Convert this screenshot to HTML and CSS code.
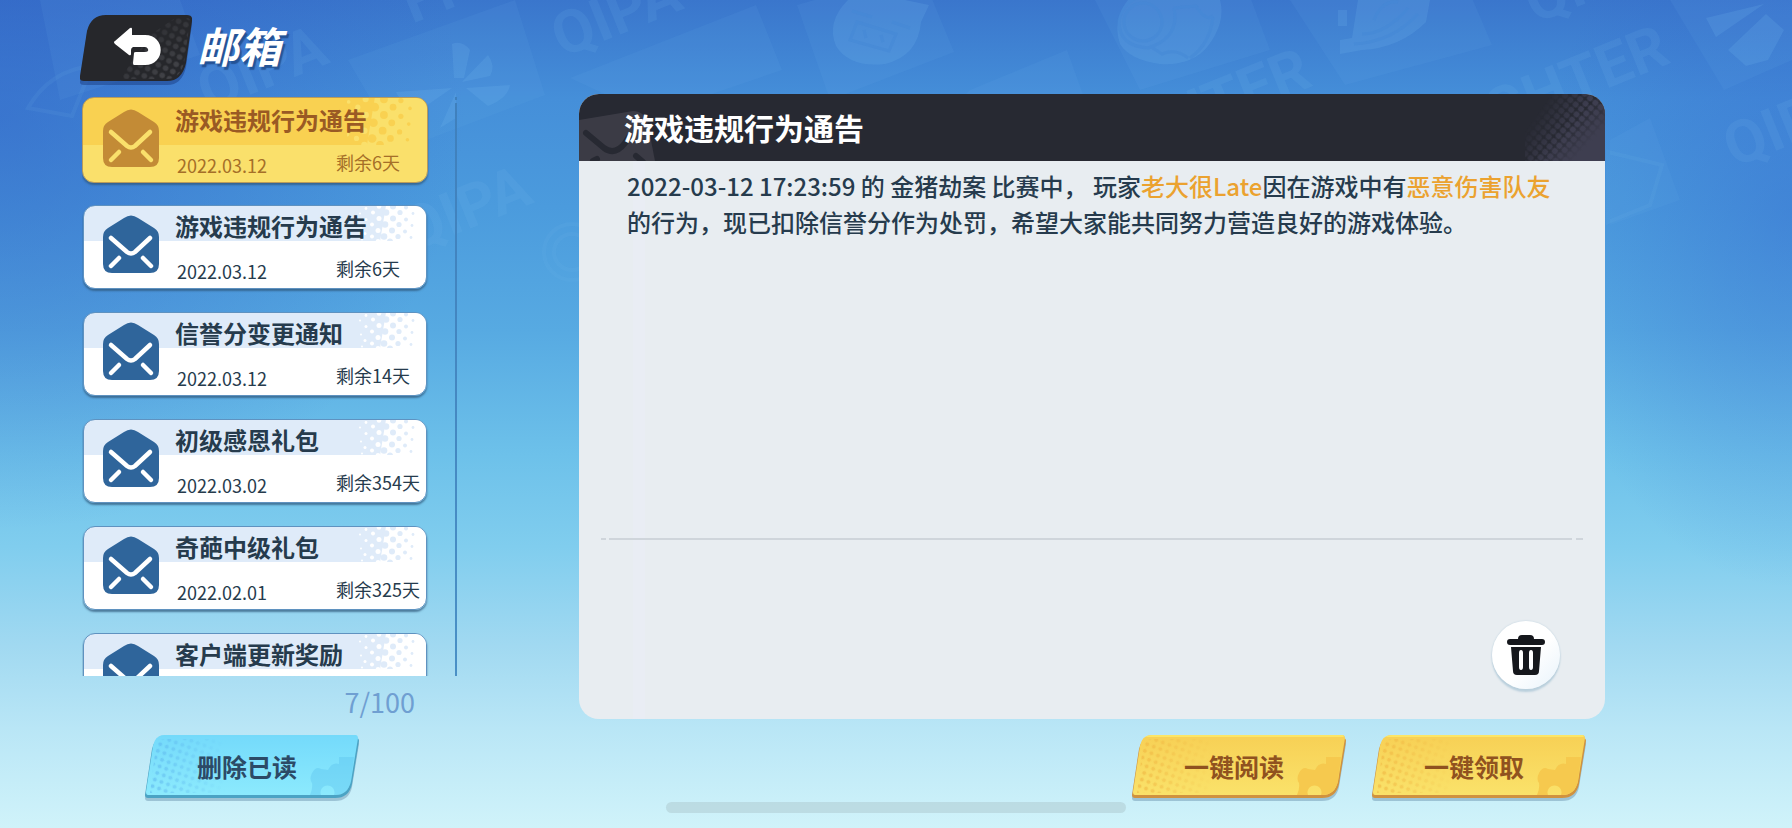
FILE: index.html
```html
<!DOCTYPE html>
<html lang="zh-CN">
  <head>
    <title>邮箱</title>
    <meta charset="UTF-8">
    <meta name="viewport" content="width=device-width, initial-scale=1">
    <link rel="stylesheet" href="styles.css">
  </head>

  <body>
    <!-- shared shapes -->
    <svg class="defs" width="0" height="0" aria-hidden="true">
      <defs>
        <linearGradient id="fade-left"><stop offset="0" stop-color="#fff"/><stop offset="1" stop-color="#000"/></linearGradient>
        <linearGradient id="fade-corner" x1="0.2" y1="0.2" x2="1" y2="0.8"><stop offset="0.1" stop-color="#000"/><stop offset="0.9" stop-color="#fff"/></linearGradient>
        <linearGradient id="face-blue" x2="0" y2="1"><stop offset="0" stop-color="#74dafb"/><stop offset="1" stop-color="#8ceafd"/></linearGradient>
        <linearGradient id="face-yellow" x2="0" y2="1"><stop offset="0" stop-color="#f7d055"/><stop offset="1" stop-color="#fae26a"/></linearGradient>
        <mask id="m-left"><rect width="80" height="60" fill="url(#fade-left)"/></mask>
        <mask id="m-back"><rect width="112" height="67" fill="url(#fade-corner)"/></mask>
        <pattern id="dots-blue" width="7" height="7" patternUnits="userSpaceOnUse" patternTransform="rotate(20)">
          <circle cx="3.5" cy="3.5" r="2" fill="#5cb4ec" fill-opacity="0.6"/>
        </pattern>
        <pattern id="dots-yellow" width="7" height="7" patternUnits="userSpaceOnUse" patternTransform="rotate(20)">
          <circle cx="3.5" cy="3.5" r="2" fill="#f0b440" fill-opacity="0.65"/>
        </pattern>
        <pattern id="dots-back" width="8" height="8" patternUnits="userSpaceOnUse" patternTransform="rotate(25)">
          <circle cx="4" cy="4" r="2.8" fill="#424348"/>
        </pattern>

        <symbol id="envelope" viewBox="0 0 56 58">
          <path fill="currentColor" d="M21 3Q28-2 35 3L51 13Q56 16 56 22V49Q56 58 47 58H9Q0 58 0 49V22Q0 16 5 13Z"/>
          <path class="flap" d="M8 23L24 37Q28 40 32 37L47 23M16 43L8 51M40 43L48 51"/>
        </symbol>

        <!-- halftone for the right end of a mail card -->
        <symbol id="halftone" viewBox="0 0 70 36" preserveAspectRatio="xMaxYMid slice">
          <g class="halftone-light">
            <circle cx="4" cy="8" r="1"/><circle cx="5" cy="22" r="1"/><circle cx="6" cy="34" r="1"/>
            <circle cx="10" cy="3" r="1.4"/><circle cx="10" cy="14" r="1.5"/><circle cx="9" cy="28" r="1.5"/>
            <circle cx="17" cy="7" r="2"/><circle cx="16" cy="19" r="2"/><circle cx="16" cy="31" r="2"/>
            <circle cx="23" cy="1" r="2.3"/><circle cx="23" cy="13" r="2.5"/><circle cx="22" cy="25" r="2.5"/><circle cx="22" cy="36" r="2.4"/>
          </g>
          <path class="halftone-clear" d="M30 0H70V36H24Z"/>
          <g class="halftone-dark">
            <circle cx="30" cy="7" r="3.3"/><circle cx="29" cy="19" r="3.3"/><circle cx="28" cy="31" r="3.3"/>
            <circle cx="37" cy="1" r="3"/><circle cx="37" cy="13" r="3"/><circle cx="36" cy="25" r="3"/><circle cx="34" cy="36" r="3"/>
            <circle cx="44" cy="7" r="2.6"/><circle cx="43" cy="19" r="2.6"/><circle cx="42" cy="31" r="2.6"/>
            <circle cx="50" cy="2" r="2"/><circle cx="50" cy="14" r="2"/><circle cx="49" cy="26" r="2"/>
            <circle cx="57" cy="8" r="1.4"/><circle cx="56" cy="20" r="1.4"/><circle cx="55" cy="32" r="1.4"/>
          </g>
        </symbol>

        <symbol id="plate" viewBox="0 0 214 68">
          <path class="plate-shadow" transform="translate(0 6)" d="M3 60Q0 60 0 57L7 11Q9 0 20 0H211Q214 0 214 3L207 46Q204 60 190 60Z"/>
          <path class="plate-edge" transform="translate(0 3)" d="M3 60Q0 60 0 57L7 11Q9 0 20 0H211Q214 0 214 3L207 46Q204 60 190 60Z"/>
          <path class="plate-face" d="M3 60Q1 60 1 57L8 11Q10 0 20 0H210Q213 0 213 3L206 46Q203 60 190 60Z"/>
          <path class="plate-top" d="M13 2Q16 0 20 0H211L212 2Z"/>
          <path class="plate-dots" mask="url(#m-left)" d="M5 58L11 11Q13 4 20 4H80V58Z"/>
          <path class="plate-gear" fill-rule="evenodd" d="M165 60Q168 53 167 48Q164 44 167 38Q171 31 176 34L183 35Q187 27 194 29L194 22H209L206 46Q203 60 190 60H189A7 7 0 1 0 176 60Z"/>
        </symbol>
      </defs>
    </svg>

    <svg class="scenery" viewBox="0 0 1792 828" preserveAspectRatio="xMidYMin slice" aria-hidden="true">
      <g class="tiles">
        <path d="M40 0H180L200 55L60 100ZM348 60L515 0L545 95L400 150ZM378 70L498 22L514 80L420 118ZM570 78L756 5L782 70L650 115ZM797 5L920 -30L954 52L830 100ZM970 90L1067 50L1085 100H960ZM1090 -10L1240 -30L1270 50L1140 90ZM1290 0L1460 -30L1492 45L1345 85ZM1670 0H1792V60L1724 90ZM1610 140L1650 118L1680 200L1610 225Z"/>
      </g>
      <g class="words">
        <text transform="translate(208 112) rotate(-22)">QIPA</text>
        <text transform="translate(412 24) rotate(-22)">FIGHTER</text>
        <text transform="translate(562 58) rotate(-22)">QIPA</text>
        <text transform="translate(412 252) rotate(-22)">QIPA</text>
        <text transform="translate(1090 176) rotate(-22)">FIGHTER</text>
        <text transform="translate(1448 153) rotate(-22)">FIGHTER</text>
        <text transform="translate(1535 24) rotate(-22)">QIPA</text>
        <text transform="translate(1734 168) rotate(-22)">QIPA</text>
      </g>
      <g class="shapes">
        <!-- fans -->
        <path d="M454 78L452 44Q462 40 470 50L464 78ZM462 82L488 55Q496 66 490 76ZM466 88L510 85Q508 98 488 106ZM452 88L396 92Q402 106 420 110ZM456 92L440 128L456 118Z"/>
        <path d="M1706 18L1764 4L1716 37ZM1766 14L1784 30L1768 60L1746 66L1728 50Z"/>
        <!-- pig -->
        <path d="M848 0H905L929 5L921 22Q918 56 885 64Q850 68 836 46Q826 22 848 0Z"/>
        <path class="ink" d="M857 22L896 34L889 51L850 40ZM852 11L872 17M892 22L910 28M864 30L866 38M881 35L883 42"/>
        <!-- helmet -->
        <path d="M1128 0H1220Q1226 22 1208 46Q1192 66 1160 64Q1130 60 1120 44Q1112 20 1128 0Z"/>
        <path class="ink" d="M1174 8Q1180 38 1148 48Q1118 46 1119 20Q1124 0 1142 -4M1174 8L1196 6Q1206 22 1213 16M1150 46L1162 54Q1176 48 1188 58M1213 17Q1210 44 1190 58"/>
        <circle class="ink" cx="1143" cy="22" r="19"/>
        <!-- robot -->
        <path d="M1358 0H1430L1426 22Q1400 48 1362 50L1340 54V40L1352 38ZM1338 10H1347V26H1338Z"/>
        <path class="ink" d="M1362 34Q1386 34 1408 8M1354 44Q1392 42 1418 14M1374 20Q1382 0 1398 2"/>
      </g>
      <g class="faint">
        <circle cx="572" cy="252" r="28"/><circle cx="572" cy="252" r="18"/>
        <path d="M1608 152L1662 165L1650 205L1608 222Z"/>
        <path d="M28 108Q50 70 92 66L72 116Z"/>
      </g>
    </svg>

    <header class="topbar">
      <button class="back" type="button" aria-label="返回">
        <svg class="back-art" viewBox="0 0 112 70" aria-hidden="true">
          <path class="back-shadow" d="M4 70Q-1 70 0 65L7 18Q11 3 26 3H107Q113 3 112 9L106 52Q102 70 87 70Z"/>
          <path fill="#26272b" d="M4 66Q-1 66 0 61L7 16Q11 0 26 0H107Q113 0 112 6L106 48Q102 66 87 66Z"/>
          <path fill="url(#dots-back)" mask="url(#m-back)" d="M40 64L70 20 95 3H107Q110 3 110 6L104 48Q100 64 87 64Z"/>
          <path fill="#fff" transform="translate(34 12)" d="M1 14L16 1Q18 0 18 2V8H31C52 8 52 38 31 38H20Q19 38 19 36L20 26Q20 25 22 25H31Q35 25 34 22Q33 20 31 20H19Q17 21 17 23V27Q17 29 15 28L1 17Q-1 15 1 14Z"/>
        </svg>
      </button>
      <h1>邮箱</h1>
    </header>

    <main>
      <section class="sidebar">
        <div class="mailbox">
          <ul class="mail-list">
            <li>
              <button class="mail selected" type="button">
                <svg class="mail-dots" aria-hidden="true"><use href="#halftone"/></svg>
                <svg class="mail-icon" aria-hidden="true"><use href="#envelope"/></svg>
                <span class="mail-text">
                  <span class="mail-title">游戏违规行为通告</span>
                  <span class="mail-meta"><span class="date">2022.03.12</span><span>剩余6天</span></span>
                </span>
              </button>
            </li>
            <li>
              <button class="mail" type="button">
                <svg class="mail-dots" aria-hidden="true"><use href="#halftone"/></svg>
                <svg class="mail-icon" aria-hidden="true"><use href="#envelope"/></svg>
                <span class="mail-text">
                  <span class="mail-title">游戏违规行为通告</span>
                  <span class="mail-meta"><span class="date">2022.03.12</span><span>剩余6天</span></span>
                </span>
              </button>
            </li>
            <li>
              <button class="mail" type="button">
                <svg class="mail-dots" aria-hidden="true"><use href="#halftone"/></svg>
                <svg class="mail-icon" aria-hidden="true"><use href="#envelope"/></svg>
                <span class="mail-text">
                  <span class="mail-title">信誉分变更通知</span>
                  <span class="mail-meta"><span class="date">2022.03.12</span><span>剩余14天</span></span>
                </span>
              </button>
            </li>
            <li>
              <button class="mail" type="button">
                <svg class="mail-dots" aria-hidden="true"><use href="#halftone"/></svg>
                <svg class="mail-icon" aria-hidden="true"><use href="#envelope"/></svg>
                <span class="mail-text">
                  <span class="mail-title">初级感恩礼包</span>
                  <span class="mail-meta"><span class="date">2022.03.02</span><span>剩余354天</span></span>
                </span>
              </button>
            </li>
            <li>
              <button class="mail" type="button">
                <svg class="mail-dots" aria-hidden="true"><use href="#halftone"/></svg>
                <svg class="mail-icon" aria-hidden="true"><use href="#envelope"/></svg>
                <span class="mail-text">
                  <span class="mail-title">奇葩中级礼包</span>
                  <span class="mail-meta"><span class="date">2022.02.01</span><span>剩余325天</span></span>
                </span>
              </button>
            </li>
            <li>
              <button class="mail" type="button">
                <svg class="mail-dots" aria-hidden="true"><use href="#halftone"/></svg>
                <svg class="mail-icon" aria-hidden="true"><use href="#envelope"/></svg>
                <span class="mail-text">
                  <span class="mail-title">客户端更新奖励</span>
                </span>
              </button>
            </li>
          </ul>
          <div class="rail"></div>
        </div>
        <div class="count">7/100</div>
        <button class="plate-button blue" type="button">
          <svg aria-hidden="true"><use href="#plate"/></svg>
          <span>删除已读</span>
        </button>
      </section>

      <section class="detail">
        <article class="panel">
          <header class="panel-header">
            <svg class="panel-envelope" viewBox="0 0 76 50" aria-hidden="true">
              <path fill="#3b3b45" d="M0 9L54 0Q66 0 69 14L76 50H0Z"/>
              <path class="panel-flap" d="M7 22L25 37Q36 45 46 32L50 26M57 45L64 51M14 50L18 48"/>
            </svg>
            <h2>游戏违规行为通告</h2>
            <svg class="panel-dots" viewBox="0 0 80 67" aria-hidden="true">
              <defs>
                <pattern id="grid-a" width="7" height="7" patternUnits="userSpaceOnUse" patternTransform="rotate(40)"><circle cx="3.5" cy="3.5" r="3" fill="#3e3e50"/></pattern>
                <linearGradient id="ga" x1="0" y1="0.4" x2="0.7" y2="0.8"><stop offset="0.1" stop-color="#000"/><stop offset="0.7" stop-color="#fff"/></linearGradient>
                <linearGradient id="gb" x1="0.55" y1="0.45" x2="0.85" y2="0.7"><stop offset="0" stop-color="#3e3e50" stop-opacity="0"/><stop offset="1" stop-color="#3e3e50"/></linearGradient>
                <mask id="ma"><rect width="80" height="67" fill="url(#ga)"/></mask>
              </defs>
              <rect width="80" height="67" fill="url(#grid-a)" mask="url(#ma)"/>
              <rect width="80" height="67" fill="url(#gb)"/>
            </svg>
          </header>
          <p class="message">2022-03-12 17:23:59 的 金猪劫案 比赛中， 玩家<em>老大很Late</em>因在游戏中有<em>恶意伤害队友</em>的行为，现已扣除信誉分作为处罚，希望大家能共同努力营造良好的游戏体验。</p>
          <footer class="panel-footer">
            <div class="divider"></div>
            <button class="trash" type="button" aria-label="删除">
              <svg viewBox="0 0 38 40" aria-hidden="true">
                <path fill="#15171c" d="M11 4Q11 0 15 0H23Q27 0 27 4H35Q38 4 38 7T35 10H3Q0 10 0 7T3 4Z"/>
                <path fill="#15171c" fill-rule="evenodd" d="M4 12H34L32 36Q32 40 28 40H10Q6 40 6 36ZM12 18V32Q12 35 14 35T16 32V18Q16 15 14 15T12 18ZM22 18V32Q22 35 24 35T26 32V18Q26 15 24 15T22 18Z"/>
              </svg>
            </button>
          </footer>
        </article>
        <div class="actions">
          <button class="plate-button yellow" type="button">
            <svg aria-hidden="true"><use href="#plate"/></svg>
            <span>一键阅读</span>
          </button>
          <button class="plate-button yellow" type="button">
            <svg aria-hidden="true"><use href="#plate"/></svg>
            <span>一键领取</span>
          </button>
        </div>
      </section>
    </main>

    <div class="home-bar"></div>
  </body>
</html>
```
FILE: styles.css
```css
* {
  box-sizing: border-box;
}

body {
  margin: 0;
  height: 100vh;
  min-height: 600px;
  display: flex;
  flex-direction: column;
  position: relative;
  overflow: hidden;
  font-family: "Noto Sans CJK SC", sans-serif;
  font-weight: 500;
  color: #263b4d;
  background:
    radial-gradient(ellipse 26% 50% at 0 14%, rgba(45, 90, 195, 0.5), rgba(50, 100, 205, 0) 100%),
    radial-gradient(ellipse 14% 45% at 100% 26%, rgba(50, 100, 205, 0.4), rgba(50, 100, 205, 0) 100%),
    linear-gradient(#3a76cc, #458fd9 12%, #4b9bdd 25%, #57aae2 40%, #6dc1ea 55%, #80cdee 66%, #a1d9f1 78%, #b9e6f6 88%, #d0f3fa 100%);
}

button {
  border: none;
  padding: 0;
  background: none;
  font-family: inherit;
  font-weight: inherit;
  color: inherit;
  cursor: pointer;
}

h1,
h2,
p,
ul {
  margin: 0;
  padding: 0;
}

.defs {
  position: absolute;
}

/* background drawing */
.scenery {
  position: absolute;
  inset: 0;
  width: 100%;
  height: 100%;
}

.tiles {
  fill: rgba(110, 180, 235, 0.1);
}

.words {
  fill: rgba(120, 190, 235, 0.12);
  font-family: Roboto, sans-serif;
  font-weight: bold;
  font-size: 60px;
}

.shapes {
  fill: rgba(125, 190, 240, 0.16);
}

.ink {
  fill: none;
  stroke: #4487d6;
  stroke-opacity: 0.5;
  stroke-width: 3px;
}

.faint {
  fill: none;
  stroke: rgba(120, 190, 240, 0.1);
  stroke-width: 4px;
}

/* top bar */
.topbar {
  position: relative;
  display: flex;
  gap: 5px;
  height: 94px;
  padding: 15px 0 0 80px;
}

.back {
  width: 112px;
  height: 70px;
}

.back-art {
  display: block;
  width: 112px;
  height: 70px;
}

.back-shadow {
  fill: rgba(25, 60, 130, 0.5);
}

h1 {
  font-size: 42px;
  line-height: 60px;
  font-weight: bold;
  font-style: italic;
  color: #fff;
  text-shadow: 2px 3px 1px rgba(25, 65, 125, 0.7);
}

main {
  position: relative;
  flex: 1;
  min-height: 0;
  display: flex;
  gap: 122px;
  padding: 0 187px 25px 82px;
}

/* mail list */
.sidebar {
  flex: none;
  width: 375px;
  padding-top: 3px;
  display: flex;
  flex-direction: column;
}

.mailbox {
  flex: 1;
  min-height: 0;
  display: flex;
  justify-content: space-between;
}

.mail-list {
  width: 347px;
  overflow: hidden;
  list-style: none;
}

.mail-list li {
  height: 84px;
  margin: 0 2px 23px 1px;
}

.mail-list li:first-child {
  height: 86px;
  margin: 0 1px 22px 0;
}

.mail {
  position: relative;
  display: flex;
  align-items: flex-start;
  gap: 16px;
  width: 100%;
  height: 100%;
  padding: 9px 0 0 19px;
  border: 1px solid #5f92c0;
  border-radius: 12px;
  background: linear-gradient(#dfebf9 35px, #fff 35px);
  box-shadow: 0 2px 2px rgba(45, 85, 120, 0.7);
  text-align: left;
}

.mail-dots {
  position: absolute;
  top: 0;
  right: 0;
  width: 70px;
  height: 35px;
  border-radius: 0 11px 0 0;
}

.halftone-light,
.halftone-clear {
  fill: var(--clear, #fff);
}

.halftone-dark {
  fill: var(--band, #dfebf9);
}

.mail-icon {
  flex: none;
  width: 56px;
  height: 58px;
  color: #2f659b;
}

.flap {
  fill: none;
  stroke: var(--flap, #fff);
  stroke-width: 4.5px;
  stroke-linecap: round;
}

.mail-text {
  position: relative;
  flex: 1;
  margin-top: -4px;
}

.mail-title {
  display: block;
  font-size: 24px;
  line-height: 30px;
  font-weight: bold;
}

.mail-meta {
  display: grid;
  grid-template-columns: 161px 1fr;
  margin-top: 17px;
  font-size: 18px;
  line-height: 20px;
  font-weight: normal;
  white-space: nowrap;
}

.date {
  padding: 3px 0 0 2px;
}

.mail.selected {
  --band: #f9d151;
  --clear: #fae06b;
  --flap: #fae06b;
  padding: 11px 0 0 20px;
  border-color: #b99b5a;
  background: linear-gradient(#f9d151 47px, #fae06b 47px);
  color: #9a5a24;
}

.selected .mail-dots {
  width: 80px;
  height: 47px;
}

.selected .mail-icon {
  color: #c38b36;
}

.selected .mail-meta {
  color: #a56f28;
}

.rail {
  width: 2px;
  background: linear-gradient(#3f80bd 3px, transparent 3px, transparent 6px, #3f80bd 6px, #4a90c6);
}

.count {
  padding: 0 42px 7px 0;
  font-size: 27px;
  line-height: 52px;
  font-weight: normal;
  text-align: right;
  color: #6f9fd2;
}

/* slanted buttons */
.plate-button {
  position: relative;
  width: 214px;
  height: 68px;
  font-size: 25px;
  font-weight: bold;
}

.plate-button svg {
  position: absolute;
  top: 0;
  left: 0;
  width: 100%;
  height: 100%;
}

.plate-button span {
  position: relative;
  display: block;
  line-height: 36px;
  padding: 0 10px 6px 0;
}

.plate-shadow {
  fill: rgba(90, 130, 160, 0.4);
}

.plate-edge {
  fill: var(--edge);
}

.plate-face {
  fill: var(--face);
}

.plate-top {
  fill: var(--top);
}

.plate-dots {
  fill: var(--dots);
}

.plate-gear {
  fill: var(--gear);
}

.blue {
  --edge: #4ba3c4;
  --face: url(#face-blue);
  --top: #74dafa;
  --dots: url(#dots-blue);
  --gear: rgba(85, 190, 235, 0.35);
  margin-left: 63px;
  color: #2c4a66;
}

.yellow {
  --edge: #d0923f;
  --face: url(#face-yellow);
  --top: #fce566;
  --dots: url(#dots-yellow);
  --gear: #f6c94e;
  color: #90521f;
}

/* detail */
.detail {
  flex: 1;
  min-width: 0;
  display: flex;
  flex-direction: column;
}

.panel {
  flex: 1;
  min-height: 0;
  display: flex;
  flex-direction: column;
  border-radius: 20px;
  overflow: hidden;
  background: linear-gradient(90deg, #e8edf1 54px, #e9edf4 54px, #e9edf4 66px, #e8edf1 66px);
}

.panel-header {
  position: relative;
  flex: none;
  padding: 0 45px;
  background: #272932;
}

.panel-envelope {
  position: absolute;
  left: 0;
  bottom: 0;
  width: 76px;
  height: 50px;
}

.panel-flap {
  fill: none;
  stroke: #272932;
  stroke-width: 6px;
  stroke-linecap: round;
}

.panel-dots {
  position: absolute;
  right: 0;
  top: 0;
  width: 80px;
  height: 67px;
}

h2 {
  position: relative;
  font-size: 30px;
  line-height: 67px;
  font-weight: bold;
  color: #fff;
}

.message {
  flex: 1;
  padding: 7px 40px 0 48px;
  font-size: 24px;
  line-height: 36px;
}

.message em {
  font-style: normal;
  color: #eba22f;
}

.panel-footer {
  flex: none;
  height: 181px;
  padding: 0 22px;
  display: flex;
  flex-direction: column;
}

.divider {
  flex: none;
  height: 2px;
  background: linear-gradient(90deg, #cfd5db 5px, transparent 5px, transparent 8px, #cfd5db 8px, #cfd5db calc(100% - 11px), transparent calc(100% - 11px), transparent calc(100% - 7px), #cfd5db calc(100% - 7px));
}

.trash {
  align-self: flex-end;
  display: grid;
  place-items: center;
  width: 68px;
  height: 68px;
  margin: 81px 23px 0 0;
  border-radius: 50%;
  background: linear-gradient(135deg, #fff 55%, #e8f3fb);
  box-shadow: 0 3px 2px #b9cfdc, 0 0 2px #b9cfdc;
}

.trash svg {
  width: 38px;
  height: 40px;
}

.actions {
  display: flex;
  justify-content: flex-end;
  gap: 26px;
  padding: 16px 19px 0 0;
}

.home-bar {
  position: absolute;
  left: 50%;
  bottom: 15px;
  width: 460px;
  height: 11px;
  margin-left: -230px;
  border-radius: 6px;
  background: rgba(165, 190, 195, 0.4);
}
```
